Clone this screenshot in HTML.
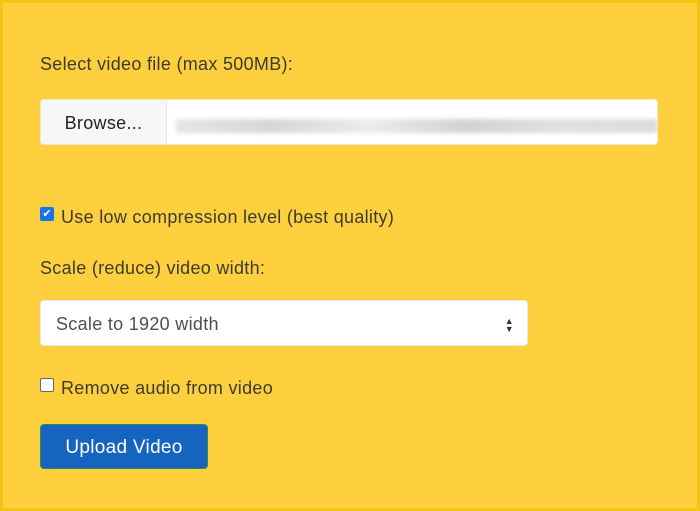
<!DOCTYPE html>
<html><head><style>
html,body{margin:0;padding:0}
body{width:700px;height:511px;box-sizing:border-box;background:#fed03e;border:3px solid #f3c415;font-family:"Liberation Sans",sans-serif;color:#3d3a30;position:relative;overflow:hidden;font-size:18px;letter-spacing:0.3px}
.a{position:absolute}
.file{left:37px;top:96px;width:618px;height:46px;background:#fff;border:1px solid #f0e6c8;border-radius:4px;box-sizing:border-box;overflow:hidden}
.browse{position:absolute;left:0;top:0;bottom:0;width:125px;background:#f6f7f9;border-right:1px solid #e4e4e4;display:flex;align-items:center;justify-content:center;color:#222}
.blur{position:absolute;left:135px;top:19px;width:482px;height:14px;background:linear-gradient(90deg,#e6e6e8,#d6d6d9 20%,#ececee 40%,#d2d2d4 60%,#e0e0e2 80%,#dcdcde);filter:blur(2px)}
.sel{left:37px;top:297px;width:488px;height:46px;background:#fff;border:1px solid #e8e8ec;border-radius:4px;box-sizing:border-box;color:#4a4f57;padding-left:15px;line-height:46px}
.cb{width:14px;height:14px;border-radius:2px;box-sizing:border-box}
.btn{left:37px;top:421px;width:168px;height:45px;background:#1565c0;border:1px solid #2e8b57;border-radius:4px;box-sizing:border-box;color:#fff;line-height:45px;text-align:center;font-size:19px}
</style></head><body>
<div class="a" style="left:37px;top:51px">Select video file (max 500MB):</div>
<div class="a file"><div class="browse" style="padding-top:2px">Browse...</div><div class="blur"></div></div>
<div class="a cb" style="left:37px;top:204px;background:#1a73e8;color:#fff;font-size:11px;line-height:14px;text-align:center;letter-spacing:0">✔</div>
<div class="a" style="left:58px;top:204px">Use low compression level (best quality)</div>
<div class="a" style="left:37px;top:255px">Scale (reduce) video width:</div>
<div class="a sel">Scale to 1920 width<span style="position:absolute;right:13px;top:16px;font-size:9px;line-height:8px;color:#333">▲<br>▼</span></div>
<div class="a cb" style="left:37px;top:375px;background:#fff;border:1px solid #666"></div>
<div class="a" style="left:58px;top:375px">Remove audio from video</div>
<div class="a btn">Upload Video</div>
</body></html>
